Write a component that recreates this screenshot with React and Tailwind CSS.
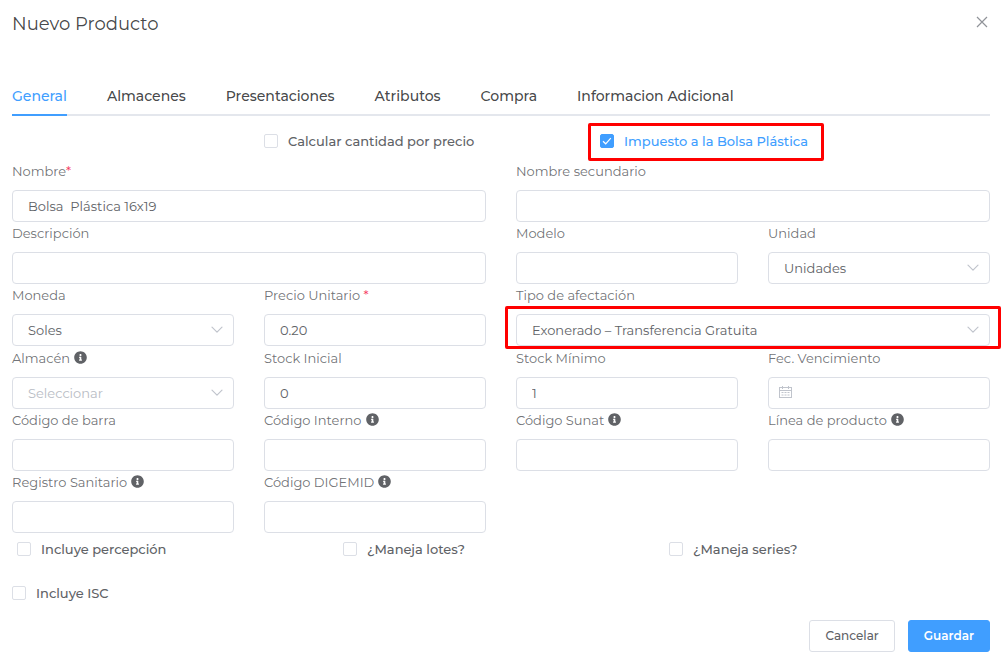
import { useState } from 'react'
import { FaInfoCircle } from 'react-icons/fa'

const TABS = ['General', 'Almacenes', 'Presentaciones', 'Atributos', 'Compra', 'Informacion Adicional']

const controlClass =
  'w-full h-8 rounded border border-[#dcdfe6] bg-white px-[15px] text-[13px] outline-none focus:border-[#409eff]'

function Chevron() {
  return (
    <svg
      className="pointer-events-none absolute right-[11px] top-[11px]"
      width="12"
      height="10"
      viewBox="0 0 12 10"
      fill="none"
      stroke="#c0c4cc"
      strokeWidth="1.2"
      strokeLinecap="round"
      strokeLinejoin="round"
    >
      <path d="M1 2.2 6 7.2 11 2.2" />
    </svg>
  )
}

function CalendarIcon() {
  return (
    <svg
      className="pointer-events-none absolute left-[11px] top-[9px]"
      width="13"
      height="13"
      viewBox="0 0 13 13"
      fill="none"
      stroke="#c0c4cc"
    >
      <rect x="0.5" y="1.5" width="12" height="10" />
      <path d="M0.5 4.5h12M3.5 0v3M9.5 0v3" />
      <path d="M2.5 6.5h2M5.5 6.5h2M8.5 6.5h2M2.5 9h2M5.5 9h2M8.5 9h2" />
    </svg>
  )
}

function Field({ id, label, required, info, wide, children }) {
  return (
    <div className={wide ? 'col-span-6' : 'col-span-3'}>
      <label htmlFor={id} className="flex h-[30px] items-start gap-1 text-[13px] leading-[22px] text-[#606266]/90">
        <span>
          {label}
          {required && <span className="text-[#f5365c]">*</span>}
        </span>
        {info && <FaInfoCircle size={13} className="mt-1 text-[#606266]" />}
      </label>
      <div className="relative">{children}</div>
    </div>
  )
}

function TextField({ id, value = '', ...rest }) {
  return (
    <Field id={id} {...rest}>
      <input id={id} type="text" defaultValue={value} className={`${controlClass} text-[#606266]`} />
    </Field>
  )
}

function SelectField({ id, option, placeholder, highlighted, ...rest }) {
  return (
    <Field id={id} {...rest}>
      <select
        id={id}
        className={`${controlClass} appearance-none pt-[2px] ${placeholder ? 'text-[#b8bcc4]' : 'text-[#606266]'}`}
      >
        <option>{option}</option>
      </select>
      <Chevron />
      {highlighted && <Highlight className="-inset-x-[11px] -top-2 -bottom-[3px]" />}
    </Field>
  )
}

function Highlight({ className }) {
  return <div className={`pointer-events-none absolute rounded-xs border-3 border-[#ff0000] ${className}`} />
}

function Check({ label, checked: initial = false, highlighted }) {
  const [checked, setChecked] = useState(initial)

  return (
    <label
      className={`relative inline-flex h-5 items-start gap-[10px] text-[13px] leading-5 font-medium ${
        checked ? 'text-[#409eff]' : 'text-[#606266]'
      }`}
    >
      <span className="relative mt-[3px] flex">
        <input
          type="checkbox"
          checked={checked}
          onChange={e => setChecked(e.target.checked)}
          className="size-[14px] appearance-none rounded-xs border border-[#dcdfe6] bg-white checked:border-[#409eff] checked:bg-[#409eff]"
        />
        {checked && (
          <svg
            className="pointer-events-none absolute inset-0"
            width="14"
            height="14"
            viewBox="0 0 14 14"
            fill="none"
            stroke="#fff"
            strokeWidth="1.2"
          >
            <path d="M3 7.2 5.7 9.8 10.8 4.2" />
          </svg>
        )}
      </span>
      {label}
      {highlighted && <Highlight className="-left-3 -right-4 -top-2 -bottom-[10px]" />}
    </label>
  )
}

export default function App() {
  const [tab, setTab] = useState('General')

  return (
    <form
      className="overflow-x-hidden bg-white pl-3 pr-4 pt-3 pb-[10px] font-['Montserrat','Inter',sans-serif]"
      onSubmit={e => e.preventDefault()}
    >
      {/* Header */}
      <header className="flex h-16 items-start justify-between">
        <h1 className="text-lg leading-6 text-[#303133]/90">Nuevo Producto</h1>
        <button type="button" aria-label="Cerrar" className="mr-px mt-[3px] p-px text-[#909399]">
          <svg width="12" height="12" viewBox="0 0 12 12" fill="none" stroke="currentColor" strokeWidth="1.2">
            <path d="M1 1 11 11M11 1 1 11" />
          </svg>
        </button>
      </header>

      {/* Tabs */}
      <nav className="flex h-10 gap-10 border-b-2 border-[#e4e7ed] text-sm font-medium">
        {TABS.map(name => (
          <button
            key={name}
            type="button"
            onClick={() => setTab(name)}
            className={`-mb-[2px] h-10 border-b-2 pt-[2px] ${
              tab === name ? 'border-[#409eff] text-[#409eff]' : 'border-transparent text-[#303133]/90'
            }`}
          >
            {name}
          </button>
        ))}
      </nav>

      <div className="mt-[15px] grid grid-cols-12 gap-x-[30px]">
        <div className="col-span-4 col-start-4 flex">
          <Check label="Calcular cantidad por precio" />
        </div>
        <div className="col-span-5 col-start-8 flex">
          <Check label="Impuesto a la Bolsa Plástica" checked highlighted />
        </div>
      </div>

      {/* Product data */}
      <div className="mt-[9px] grid grid-cols-12 gap-x-[30px]">
        <TextField id="nombre" label="Nombre" required value="Bolsa  Plástica 16x19" wide />
        <TextField id="nombre2" label="Nombre secundario" wide />

        <TextField id="descripcion" label="Descripción" wide />
        <TextField id="modelo" label="Modelo" />
        <SelectField id="unidad" label="Unidad" option="Unidades" />

        <SelectField id="moneda" label="Moneda" option="Soles" />
        <TextField id="precio" label="Precio Unitario " required value="0.20" />
        <SelectField id="afectacion" label="Tipo de afectación" option="Exonerado – Transferencia Gratuita" wide highlighted />
      </div>

      {/* Stock and codes */}
      <div className="mt-px grid grid-cols-12 gap-x-[30px]">
        <SelectField id="almacen" label="Almacén" info option="Seleccionar" placeholder />
        <TextField id="stock" label="Stock Inicial" value="0" />
        <TextField id="stock-min" label="Stock Mínimo" value="1" />
        <Field id="vencimiento" label="Fec. Vencimiento">
          <input id="vencimiento" type="text" className={`${controlClass} pl-8 text-[#606266]`} />
          <CalendarIcon />
        </Field>

        <TextField id="barra" label="Código de barra" />
        <TextField id="interno" label="Código Interno" info />
        <TextField id="sunat" label="Código Sunat" info />
        <TextField id="linea" label="Línea de producto" info />

        <TextField id="registro" label="Registro Sanitario" info />
        <TextField id="digemid" label="Código DIGEMID" info />
      </div>

      <div className="mt-[6px] grid grid-cols-3">
        <div className="flex px-[5px]">
          <Check label="Incluye percepción" />
        </div>
        <div className="flex px-[5px]">
          <Check label="¿Maneja lotes?" />
        </div>
        <div className="flex px-[5px]">
          <Check label="¿Maneja series?" />
        </div>
      </div>
      <div className="mt-6 flex">
        <Check label="Incluye ISC" />
      </div>

      {/* Footer */}
      <footer className="mt-[17px] flex justify-end gap-[13px] text-xs">
        <button type="button" className="h-8 rounded-[3px] border border-[#dcdfe6] bg-white px-[15px] font-medium text-[#606266]">
          Cancelar
        </button>
        <button type="submit" className="h-8 rounded-[3px] border border-[#409eff] bg-[#409eff] px-[15px] font-semibold text-white">
          Guardar
        </button>
      </footer>
    </form>
  )
}
